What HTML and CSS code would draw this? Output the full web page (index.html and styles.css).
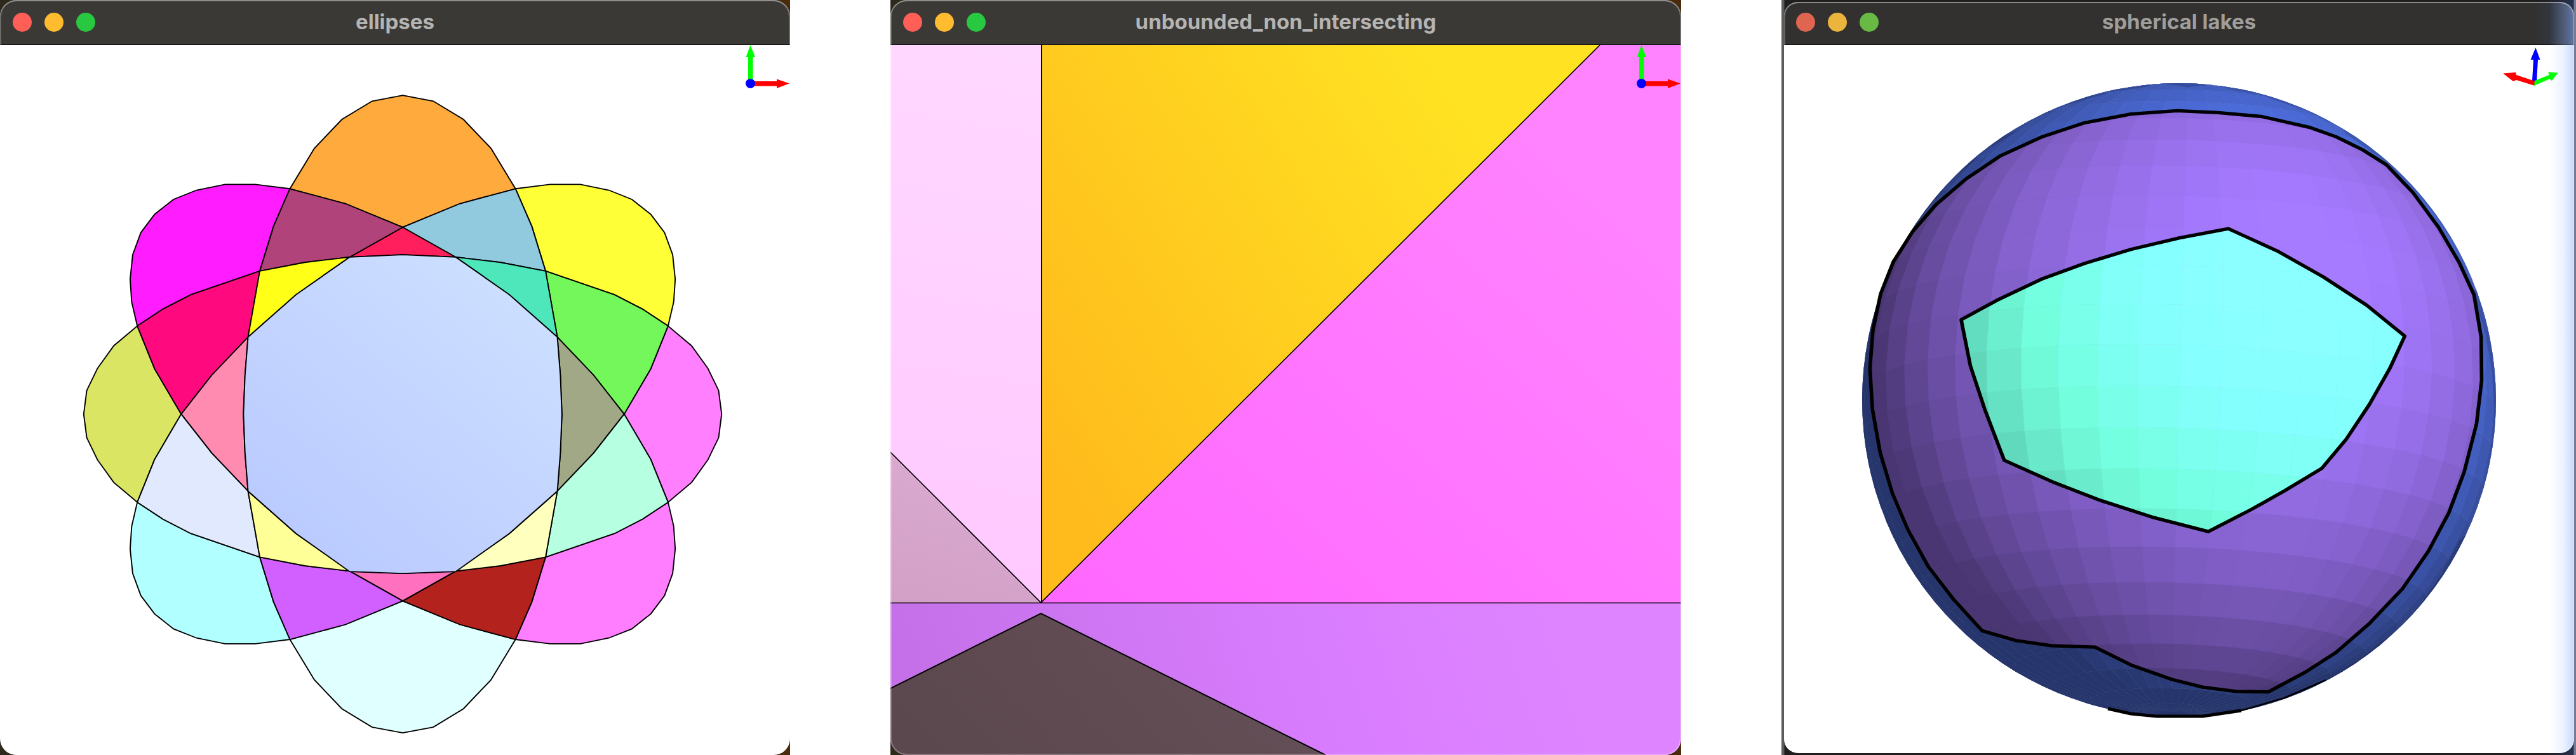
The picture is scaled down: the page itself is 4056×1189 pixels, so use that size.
FILE: index.html
```html
<!DOCTYPE html>
<html lang="en">
<head>
<meta charset="utf-8">
<title>Arrangement viewers</title>
<link rel="stylesheet" href="styles.css">
</head>
<body>
<main class="desktop">
  <section class="frame">
    <div class="window">
      <header class="titlebar"><span class="lights"><i class="close"></i><i class="minimize"></i><i class="zoom"></i></span><h1 class="title">ellipses</h1></header>
      <svg class="view" viewBox="0 71 1244 1118" preserveAspectRatio="none">
        <defs>
          <path id="tip" d="M789 198L849 210L908 248L962 308L1010 392L901 423L789 472L677 423L568 392L616 308L670 248L729 210Z"/>
          <path id="petal" d="M1010 392L1078 383L1137 383L1193 395L1238 414L1275 445L1302 483L1318 529L1323 580L1320 627L1309 677L1259 642L1204 612L1069 563L1042 470Z"/>
          <path id="side" d="M1309 677L1355 718L1387 765L1408 811L1414 860L1408 909L1387 955L1355 1002L1309 1043L1275 954L1223 860L1275 766Z"/>
          <path id="upper" d="M789 472L901 423L1010 392L1042 470L1069 563L981 545L893 534Z"/>
          <path id="outer" d="M1069 563L1204 612L1259 642L1309 677L1275 766L1223 860L1163 779L1092 700Z"/>
          <path id="cap" d="M789 472L893 534L789 529L685 534Z"/>
          <path id="sliver" d="M893 534L981 545L1069 563L1092 700L998 612Z"/>
          <path id="wedge" d="M1092 700L1163 779L1223 860L1163 941L1092 1020L1098 940L1101 860L1098 780Z"/>
          <linearGradient id="core" x1="0.1" y1="1" x2="0.9" y2="0"><stop offset="0" stop-color="#b8c8ff"/><stop offset="1" stop-color="#cee1ff"/></linearGradient>
        </defs>
        <g class="faces" transform="scale(.8036 .7583)">
          <use href="#tip" fill="#ffaa3c"/>
          <use href="#petal" fill="#ffff38"/>
          <use href="#side" fill="#ff7fff"/>
          <use href="#upper" fill="#91c9de"/>
          <use href="#outer" fill="#74f75b"/>
          <use href="#cap" fill="#ff1f5c"/>
          <use href="#sliver" fill="#4ee6bb"/>
          <use href="#wedge" fill="#a0a886"/>
          <g transform="translate(1578 0) scale(-1 1)">
            <use href="#petal" fill="#ff1cff"/>
            <use href="#side" fill="#dae663"/>
            <use href="#upper" fill="#b04379"/>
            <use href="#outer" fill="#ff0a7e"/>
            <use href="#sliver" fill="#ffff18"/>
            <use href="#wedge" fill="#ff8bb0"/>
          </g>
          <g transform="translate(0 1720) scale(1 -1)">
            <use href="#tip" fill="#e0ffff"/>
            <use href="#petal" fill="#ff7dff"/>
            <use href="#upper" fill="#b4221e"/>
            <use href="#outer" fill="#b6ffe0"/>
            <use href="#cap" fill="#ff70bf"/>
            <use href="#sliver" fill="#ffffbe"/>
          </g>
          <g transform="translate(1578 1720) scale(-1 -1)">
            <use href="#petal" fill="#b1ffff"/>
            <use href="#upper" fill="#d25fff"/>
            <use href="#outer" fill="#e1e9ff"/>
            <use href="#sliver" fill="#ffff98"/>
          </g>
          <path fill="url(#core)" d="M789 529L893 534L998 612L1092 700L1098 780L1101 860L1098 940L1092 1020L998 1108L893 1187L789 1191L685 1187L580 1108L486 1020L480 940L477 860L480 780L486 700L580 612L685 534Z"/>
        </g>
        <g id="triad">
          <path fill="#00ff00" d="M1178 132V90H1174.500L1181.500 71L1189 90H1185.500V132Z"/>
          <path fill="#ff0000" d="M1182 128H1223V124.500L1243 131.500L1223 139V135.500H1182Z"/>
          <circle cx="1181.500" cy="131.500" r="7.500" fill="#0000ff"/>
        </g>
      </svg>
    </div>
  </section>

  <section class="frame">
    <div class="window">
      <header class="titlebar"><span class="lights"><i class="close"></i><i class="minimize"></i><i class="zoom"></i></span><h1 class="title">unbounded_non_intersecting</h1></header>
      <svg class="view" viewBox="0 71 1245 1118" preserveAspectRatio="none">
        <defs>
          <linearGradient id="gold" gradientUnits="userSpaceOnUse" x1="237" y1="700" x2="950" y2="250"><stop offset="0" stop-color="#ffbb1c"/><stop offset="1" stop-color="#ffe222"/></linearGradient>
          <linearGradient id="pink" gradientUnits="userSpaceOnUse" x1="300" y1="950" x2="1000" y2="200"><stop offset="0" stop-color="#ff68ff"/><stop offset="1" stop-color="#ff82ff"/></linearGradient>
          <linearGradient id="blush" gradientUnits="userSpaceOnUse" x1="100" y1="900" x2="240" y2="71"><stop offset="0" stop-color="#ffc9ff"/><stop offset="1" stop-color="#ffd8ff"/></linearGradient>
          <linearGradient id="rose" x1="0" y1="1" x2="0.3" y2="0"><stop offset="0" stop-color="#d2a0c6"/><stop offset="1" stop-color="#dbaad0"/></linearGradient>
          <linearGradient id="violet" gradientUnits="userSpaceOnUse" x1="0" y1="1130" x2="1000" y2="800"><stop offset="0" stop-color="#c36fe6"/><stop offset="0.650" stop-color="#d97dff"/><stop offset="1" stop-color="#df84ff"/></linearGradient>
          <linearGradient id="umber" x1="0" y1="0.800" x2="1" y2="0.500"><stop offset="0" stop-color="#5b474e"/><stop offset="1" stop-color="#654f58"/></linearGradient>
        </defs>
        <path fill="url(#blush)" d="M0 71H237V949L0 712Z"/>
        <path fill="url(#rose)" d="M0 712L237 949H0Z"/>
        <path fill="url(#gold)" d="M237 71H1117L237 949Z"/>
        <path fill="url(#pink)" d="M1117 71H1245V949H237Z"/>
        <path fill="url(#violet)" d="M0 949H1245V1189H0Z"/>
        <path fill="url(#umber)" d="M0 1084L237 966L685 1189H0Z"/>
        <path class="edge" d="M0 712L237 949L1117 71M0 949.500H1245"/>
        <path class="edge edge-strong" d="M238 71V949M0 1084L237 966L685 1189"/>
        <use href="#triad" x="1"/>
      </svg>
    </div>
  </section>

  <section class="frame frame-tinted">
    <div class="window window-tinted">
      <header class="titlebar"><span class="lights"><i class="close"></i><i class="minimize"></i><i class="zoom"></i></span><h1 class="title">spherical lakes</h1></header>
      <svg class="view" viewBox="2809 71 1244 1115" preserveAspectRatio="none">
        <defs>
          <clipPath id="ball"><circle cx="3431" cy="630" r="499"/></clipPath>
          <clipPath id="landClip"><path id="land" transform="translate(2790 0) scale(.8074 .7583)" d="M790 230L870 234L955 242L1050 265L1100 284L1150 310L1198 342L1250 400L1300 472L1340 545L1369 612L1383 700L1384 790L1374 880L1350 980L1320 1065L1280 1145L1230 1222L1165 1295L1100 1355L1040 1396L968 1437L905 1436L840 1427L780 1411L700 1381L630 1344L545 1341L475 1330L410 1310L355 1246L305 1177L265 1100L235 1025L211 940L196 850L191 765L197 685L212 610L237 543L275 480L320 425L378 372L445 324L525 285L610 255L700 237Z"/></clipPath>
          <clipPath id="lakeClip"><path id="lake" transform="translate(2790 0) scale(.8074 .7583)" d="M890 475L985 521L1075 575L1160 634L1234 698L1205 765L1165 840L1120 912L1072 973L1000 1019L935 1058L851 1104L745 1075L640 1039L550 1002L453 956L415 850L387 760L369 664L440 623L525 580L610 547L700 518L795 494Z"/></clipPath>
        </defs>
        <g clip-path="url(#ball)"><g class="facets" data-color="86,122,246"></g></g>
        <g clip-path="url(#landClip)"><g class="facets" data-color="167,123,258"></g></g>
        <g clip-path="url(#lakeClip)"><g class="facets" data-color="139,310,268"></g></g>
        <g class="shore">
          <use href="#land"/><use href="#lake"/>
          <path d="M3319 1116L3355 1124L3396 1128L3468 1128L3529 1119"/>
          <path class="shore-thin" d="M3529 1119L3597 1099L3662 1071"/>
        </g>
        <path fill="#0000ff" d="M3987 127L3989 94H3984.500L3992.500 75L3999.500 94H3996L3994 130Z"/>
        <path fill="#ff0000" d="M3991 135L3962 126L3957 128L3941 115.500L3961 114L3962 118L3992 128Z"/>
        <path fill="#00ff00" d="M3990 135L3991 127L4014 118L4012 113.500L4028 114.500L4018 127L4014 124.500Z"/>
      </svg>
    </div>
  </section>
</main>
<script src="sphere.js"></script>
</body>
</html>
```
FILE: styles.css
```css
* { box-sizing: border-box; }
body { margin: 0; background: #fff; font-family: Inter, "Liberation Sans", sans-serif; }
.desktop { display: grid; grid-template-columns: 1244px 1245px 1251px; column-gap: 158px; width: 4056px; height: 1189px; overflow: hidden; }
.frame { background: linear-gradient(90deg, #2d2a1c, #16120c 30%, #16120c 70%, #4a2c0c); height: 1189px; overflow: hidden; }
.frame-tinted { padding: 3px 3px 3px 4px; background: linear-gradient(90deg, #5a5a5a 4px, #201e1e 5px, #201e1e 1200px, #26314d 1247px, #767a92 1248px); }
.window { position: relative; display: flex; flex-direction: column; height: 100%; border-radius: 26px; overflow: hidden; background: #fff; }
.window::after { content: ""; position: absolute; inset: 0; border-radius: 26px; box-shadow: inset 0 2px 0 rgba(255,255,255,.25), inset 0 0 0 2px rgba(255,255,255,.25); pointer-events: none; }
.titlebar { flex: 0 0 71px; display: grid; grid-template-columns: 200px 1fr 200px; align-items: center; background: #3a3936; border-bottom: 2px solid #1a1819; }
.lights { display: flex; gap: 20px; padding-left: 20px; }
.lights i { width: 30px; height: 30px; border-radius: 50%; }
.close { background: #ff5f57; }
.minimize { background: #febc2e; }
.zoom { background: #28c840; }
.title { margin: 0; justify-self: center; font-size: 33px; line-height: 40px; font-weight: 700; color: #b5b4b2; white-space: nowrap; transform: translateY(-1px); }
.view { display: block; width: 100%; flex: 1; min-height: 0; }
.faces { stroke: #000; stroke-width: 2.4px; }
.edge { fill: none; stroke: #000; stroke-width: 1.6px; }
.edge-strong { stroke-width: 2px; }
.shore { fill: none; stroke: #000; stroke-width: 7px; stroke-linejoin: round; }
.shore > path { stroke-width: 5px; }
.shore > .shore-thin { stroke-width: 2.5px; }
.window-tinted { border-radius: 22px; }
.window-tinted .titlebar { flex-basis: 68px; padding-bottom: 3px; background: linear-gradient(90deg, #32312f 1180px, #313a52 1238px); }
.window-tinted .close { background: #df6550; }
.window-tinted .minimize { background: #ebb43c; }
.window-tinted .zoom { background: #69b945; }
.window-tinted .lights { padding-left: 19px; }
.window-tinted .title { color: #9f9e9c; }
.window-tinted::after { border-radius: 22px; background: linear-gradient(90deg, transparent 1205px, rgba(170,200,255,.25) 1228px, rgba(140,175,245,.5) 1244px); }
```
FILE: sphere.js
```js
// Shade a latitude/longitude faceted sphere, seen from slightly below the equator.
const CX = 3431, CY = 630, R = 501, STEP = 7.5;
const rad = d => d * Math.PI / 180;
const tilt = rad(10), roll = rad(-1.5);

function project(lat, lon) {
  const x = Math.cos(rad(lat)) * Math.sin(rad(lon));
  const y = Math.sin(rad(lat));
  const z = Math.cos(rad(lat)) * Math.cos(rad(lon));
  const y1 = y * Math.cos(tilt) + z * Math.sin(tilt);
  const z1 = z * Math.cos(tilt) - y * Math.sin(tilt);
  return [x * Math.cos(roll) - y1 * Math.sin(roll), x * Math.sin(roll) + y1 * Math.cos(roll), z1];
}

document.querySelectorAll(".facets").forEach(group => {
  const base = group.dataset.color.split(",").map(Number);
  let markup = "";
  for (let lat = -90; lat < 90; lat += STEP) {
    for (let lon = -180; lon < 180; lon += STEP) {
      const n = project(lat + STEP / 2, lon + STEP / 2);
      if (n[2] < -0.12) continue;
      const s = Math.min(1, Math.max(0.44, 0.47 + 0.2 * n[0] + 0.22 * n[1] + 0.45 * n[2]));
      const fill = base.map(c => Math.min(255, Math.round(c * s))).join(",");
      const pts = [[lat, lon], [lat, lon + STEP], [lat + STEP, lon + STEP], [lat + STEP, lon]]
        .map(p => project(...p))
        .map(p => (CX + R * p[0]).toFixed(1) + "," + (CY - R * p[1]).toFixed(1)).join(" ");
      markup += `<polygon points="${pts}" fill="rgb(${fill})" stroke="rgb(${fill})" stroke-width="0.6"/>`;
    }
  }
  group.innerHTML = markup;
});
```
